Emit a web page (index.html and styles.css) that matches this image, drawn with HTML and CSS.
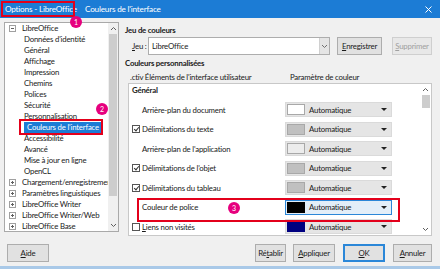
FILE: index.html
```html
<!DOCTYPE html>
<html lang="fr">
  <head>
    <meta charset="UTF-8" />
    <title>Options - LibreOffice</title>
    <link rel="stylesheet" href="styles.css">
  </head>
  <body>
    <div class="window">
      <div class="titlebar">
        <span class="title-main">Options - LibreOffice</span>
        <span class="title-sub">Couleurs de l'interface</span>
        <svg class="close" width="7" height="7" viewBox="0 0 7 7"><path d="M0.5 0.5L6.5 6.5M6.5 0.5L0.5 6.5" stroke="#fff" stroke-width="1"/></svg>
      </div>

      <div class="main">
        <div class="tree">
          <ul class="tree-list">
            <li class="top"><span class="exp minus"></span>LibreOffice</li>
            <li class="child">Données d'identité</li>
            <li class="child">Général</li>
            <li class="child">Affichage</li>
            <li class="child">Impression</li>
            <li class="child">Chemins</li>
            <li class="child">Polices</li>
            <li class="child">Sécurité</li>
            <li class="child">Personnalisation</li>
            <li class="child sel-row"><span class="sel">Couleurs de l'interface</span></li>
            <li class="child">Accessibilité</li>
            <li class="child">Avancé</li>
            <li class="child">Mise à jour en ligne</li>
            <li class="child">OpenCL</li>
            <li class="top"><span class="exp plus"></span>Chargement/enregistrement</li>
            <li class="top"><span class="exp plus"></span>Paramètres linguistiques</li>
            <li class="top"><span class="exp plus"></span>LibreOffice Writer</li>
            <li class="top"><span class="exp plus"></span>LibreOffice Writer/Web</li>
            <li class="top"><span class="exp plus"></span>LibreOffice Base</li>
            <li class="top"><span class="exp plus"></span>LibreOffice Calc</li>
          </ul>
          <div class="vscroll tree-scroll">
            <svg class="arrow" width="5" height="3" viewBox="0 0 5 3"><path d="M0 3L2.5 0.5L5 3" fill="none" stroke="#606060"/></svg>
            <span class="thumb"></span>
            <svg class="arrow" width="5" height="3" viewBox="0 0 5 3"><path d="M0 0L2.5 2.5L5 0" fill="none" stroke="#606060"/></svg>
          </div>
        </div>

        <div class="pane">
          <div class="heading">Jeu de couleurs</div>
          <div class="scheme-row">
            <span class="scheme-label"><u>J</u>eu :</span>
            <div class="combo">
              <span class="combo-text">LibreOffice</span>
              <span class="combo-btn">
                <svg width="5" height="3" viewBox="0 0 5 3"><path d="M0 0L2.5 2.5L5 0" fill="none" stroke="#707070"/></svg>
              </span>
            </div>
            <button class="btn btn-save"><u>E</u>nregistrer</button>
            <button class="btn btn-del" disabled><u>S</u>upprimer</button>
          </div>

          <div class="heading">Couleurs personnalisées</div>
          <div class="col-head">
            <span class="col-a">.ctiv Éléments de l'interface utilisateur</span>
            <span class="col-b">Paramètre de couleur</span>
          </div>

          <div class="listbox">
            <div class="rows">
              <div class="group">Général</div>
              <div class="row">
                <span class="checkcol"></span>
                <span class="label">Arrière-plan du document</span>
                <div class="picker"><span class="swatch sw-white"></span>Automatique<span class="tri"></span></div>
              </div>
              <div class="row">
                <span class="checkcol"><span class="check on"></span></span>
                <span class="label">Délimitations du texte</span>
                <div class="picker"><span class="swatch sw-grey"></span>Automatique<span class="tri"></span></div>
              </div>
              <div class="row">
                <span class="checkcol"></span>
                <span class="label">Arrière-plan de l'application</span>
                <div class="picker"><span class="swatch sw-light"></span>Automatique<span class="tri"></span></div>
              </div>
              <div class="row">
                <span class="checkcol"><span class="check on"></span></span>
                <span class="label">Délimitations de l'objet</span>
                <div class="picker"><span class="swatch sw-grey"></span>Automatique<span class="tri"></span></div>
              </div>
              <div class="row">
                <span class="checkcol"><span class="check on"></span></span>
                <span class="label">Délimitations du tableau</span>
                <div class="picker"><span class="swatch sw-grey"></span>Automatique<span class="tri"></span></div>
              </div>
              <div class="row">
                <span class="checkcol"></span>
                <span class="label">Couleur de police</span>
                <div class="picker focus"><span class="swatch sw-black"></span>Automatique<span class="tri"></span></div>
              </div>
              <div class="row">
                <span class="checkcol"><span class="check"></span></span>
                <span class="label"><u>L</u>iens non visités</span>
                <div class="picker"><span class="swatch sw-navy"></span>Automatique<span class="tri"></span></div>
              </div>
            </div>
            <div class="vscroll list-scroll">
              <svg class="arrow" width="5" height="3" viewBox="0 0 5 3"><path d="M0 3L2.5 0.5L5 3" fill="none" stroke="#606060"/></svg>
              <span class="thumb"></span>
              <span class="spacer"></span>
              <svg class="arrow" width="5" height="3" viewBox="0 0 5 3"><path d="M0 0L2.5 2.5L5 0" fill="none" stroke="#606060"/></svg>
            </div>
          </div>
        </div>
      </div>

      <div class="footer">
        <button class="btn btn-help"><u>A</u>ide</button>
        <div class="footer-right">
          <button class="btn btn-reset">Ré<u>t</u>ablir</button>
          <button class="btn btn-apply"><u>A</u>ppliquer</button>
          <button class="btn btn-ok"><u>O</u>K</button>
          <button class="btn btn-cancel"><u>A</u>nnuler</button>
        </div>
      </div>
      <div class="edge"></div>

      <!-- annotations -->
      <div class="mark mark-1"></div>
      <div class="mark mark-2"></div>
      <div class="mark mark-3"></div>
      <span class="badge badge-1">1</span>
      <span class="badge badge-2">2</span>
      <span class="badge badge-3">3</span>
    </div>
  </body>
</html>
```

FILE: styles.css
```css
* {
  box-sizing: border-box;
}
body {
  margin: 0;
  font-family: Lato, "Liberation Sans", sans-serif;
  font-size: 7.8px;
  letter-spacing: -0.2px;
  color: #1a1a1a;
  background-color: #f0f0f0;
}
.window {
  position: relative;
  width: 440px;
  height: 269px;
  overflow: hidden;
  background-color: #f0f0f0;
}
.titlebar {
  height: 18px;
  background-color: #1c7cd5;
  color: white;
  display: flex;
  align-items: center;
  padding-left: 5px;
  font-size: 8.2px;
}
.title-sub {
  margin-left: 8px;
}
.close {
  margin-left: auto;
  margin-right: 8px;
}

.main {
  display: flex;
  gap: 6px;
  height: 218px;
  padding: 4px 8px 0 4px;
}
.tree {
  width: 115px;
  height: 210px;
  background-color: white;
  border: 1px solid #a9a9a9;
  display: flex;
  overflow: hidden;
}
.tree-list {
  list-style: none;
  margin: 0;
  padding: 0;
  flex: 1;
  overflow: hidden;
}
.tree-list li {
  height: 11px;
  line-height: 11px;
  white-space: nowrap;
  display: flex;
  align-items: center;
}
.tree-list .top {
  padding-left: 4px;
}
.tree-list .child {
  padding-left: 19px;
}
.sel {
  background-color: #1c7cd5;
  color: white;
  padding: 0 2px 0 3px;
  line-height: 11px;
}
.exp {
  position: relative;
  flex: none;
  width: 7px;
  height: 7px;
  border: 1px solid #a0a0a0;
  margin-right: 6px;
}
.exp::before {
  content: "";
  position: absolute;
  left: 1px;
  top: 2px;
  width: 3px;
  height: 1px;
  background-color: #606060;
}
.exp.plus::after {
  content: "";
  position: absolute;
  left: 2px;
  top: 1px;
  width: 1px;
  height: 3px;
  background-color: #606060;
}

.vscroll {
  flex: none;
  width: 10px;
  display: flex;
  flex-direction: column;
  align-items: center;
  background-color: #f0f0f0;
}
.vscroll .arrow {
  margin: 4px 0;
}
.tree-scroll .thumb {
  width: 8px;
  height: 162px;
  background-color: #cdcdcd;
  margin-bottom: auto;
}

.pane {
  width: 307px;
}
.heading {
  font-weight: bold;
  line-height: 12px;
  margin-top: 2px;
}
.scheme-row {
  display: flex;
  align-items: center;
  height: 18px;
  margin-top: 1px;
  padding-left: 7px;
}
.scheme-label {
  width: 16px;
  white-space: nowrap;
}
.combo {
  width: 182px;
  height: 18px;
  margin-right: 7px;
  background-color: white;
  border: 1px solid #adadad;
  display: flex;
  align-items: center;
}
.combo-text {
  flex: 1;
  padding-left: 3px;
}
.combo-btn {
  width: 10px;
  height: 16px;
  background-color: #e5e5e5;
  border-left: 1px solid #d0d0d0;
  display: flex;
  align-items: center;
  justify-content: center;
}
.btn {
  font-family: inherit;
  font-size: 7.8px;
  letter-spacing: -0.2px;
  color: #1a1a1a;
  height: 18px;
  padding: 0;
  background-color: #e1e1e1;
  border: 1px solid #adadad;
}
.btn-save {
  width: 45px;
  margin-right: 10px;
}
.btn-del {
  width: 40px;
  color: #a0a0a0;
  background-color: #e8e8e8;
  border-color: #cfcfcf;
}

.col-head {
  display: flex;
  line-height: 12px;
  margin-top: 2px;
  padding-left: 5px;
}
.col-a {
  width: 160px;
  overflow: hidden;
  white-space: nowrap;
}

.listbox {
  margin-left: 3px;
  width: 304px;
  height: 153px;
  background-color: white;
  border: 1px solid #c8c8c8;
  display: flex;
  overflow: hidden;
}
.rows {
  flex: 1;
}
.group {
  font-weight: bold;
  line-height: 12px;
  height: 16px;
  padding-left: 3px;
}
.row {
  height: 19.5px;
  display: flex;
  align-items: center;
  padding-left: 3px;
}
.checkcol {
  width: 10px;
  display: flex;
  align-items: center;
}
.check {
  position: relative;
  width: 8px;
  height: 8px;
  border: 1px solid #555;
  background-color: white;
}
.check.on::after {
  content: "";
  position: absolute;
  left: 1.5px;
  top: 0;
  width: 2px;
  height: 4px;
  border: solid #333;
  border-width: 0 1px 1px 0;
  transform: rotate(40deg);
}
.label {
  width: 143px;
  white-space: nowrap;
}
.picker {
  width: 107px;
  height: 15px;
  background-color: #e5e5e5;
  border: 1px solid #dadada;
  display: flex;
  align-items: center;
  padding-left: 1px;
}
.picker.focus {
  border-color: #2b87d8;
  background-color: #e3eef8;
}
.swatch {
  width: 18px;
  height: 11px;
  margin-right: 4px;
  border: 1px solid #a8a8a8;
}
.sw-white { background-color: #ffffff; }
.sw-grey { background-color: #c0c0c0; }
.sw-light { background-color: #ececec; }
.sw-black { background-color: #000000; border-color: #000; }
.sw-navy { background-color: #000080; border-color: #000080; }
.tri {
  margin-left: auto;
  margin-right: 4px;
  width: 0;
  height: 0;
  border-left: 3px solid transparent;
  border-right: 3px solid transparent;
  border-top: 3px solid #222;
}
.list-scroll {
  width: 11px;
  background-color: white;
}
.list-scroll .thumb {
  width: 8px;
  height: 13px;
  background-color: #cdcdcd;
}
.list-scroll .spacer {
  flex: 1;
}

.footer {
  display: flex;
  height: 26px;
  padding: 8px 8px 0 7px;
}
.btn-help {
  width: 42px;
}
.footer-right {
  margin-left: auto;
  display: flex;
}
.btn-reset {
  width: 31px;
  margin-right: 7px;
}
.btn-apply {
  width: 42px;
  margin-right: 8px;
}
.btn-ok {
  width: 42px;
  margin-right: 8px;
  border: 1px solid #2b87d8;
  box-shadow: inset 0 0 0 1px #2b87d8;
}
.btn-cancel {
  width: 39px;
}
.edge {
  height: 7px;
  border-top: 4px solid #f0f0f0;
  background-color: #a9c9e8;
}

.mark {
  position: absolute;
  border: 2px solid #e3001b;
}
.mark-1 {
  left: 1px;
  top: 1px;
  width: 74px;
  height: 16px;
}
.mark-2 {
  left: 19px;
  top: 119px;
  width: 84px;
  height: 16px;
}
.mark-3 {
  left: 137px;
  top: 198px;
  width: 263px;
  height: 24px;
}
.badge {
  position: absolute;
  width: 12px;
  height: 12px;
  border-radius: 50%;
  background-color: #e6007e;
  color: white;
  font-size: 7px;
  letter-spacing: 0;
  line-height: 12px;
  text-align: center;
}
.badge-1 {
  left: 70px;
  top: 16px;
}
.badge-2 {
  left: 96px;
  top: 103px;
}
.badge-3 {
  left: 228px;
  top: 202px;
}
```
